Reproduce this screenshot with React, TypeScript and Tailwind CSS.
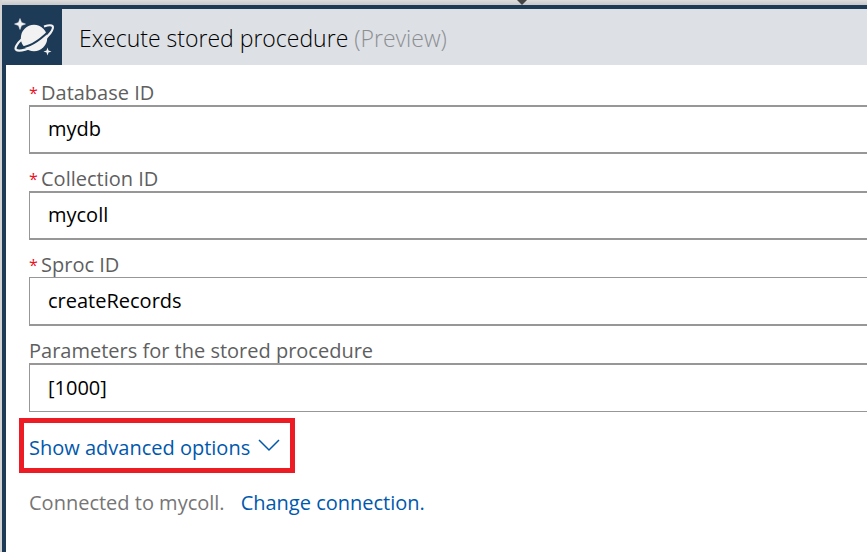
import React from "react";

type Field = {
  id: string;
  label: string;
  value: string;
  required: boolean;
  edges: string;
};

const fields: Field[] = [
  { id: "database", label: "Database ID", value: "mydb", required: true, edges: "border-y-2" },
  { id: "collection", label: "Collection ID", value: "mycoll", required: true, edges: "border-y-2" },
  { id: "sproc", label: "Sproc ID", value: "createRecords", required: true, edges: "border-t border-b-2" },
  { id: "parameters", label: "Parameters for the stored procedure", value: "[1000]", required: false, edges: "border-t-2 border-b" },
];

function PlanetIcon() {
  return (
    <svg viewBox="0 0 56 56" className="size-14" aria-hidden="true">
      <circle cx="28" cy="29" r="13.200" fill="#f2f2f2" />
      <path
        d="M13 38.800C21 38.500 32 33 42.500 22.500"
        fill="none"
        stroke="#1d3a57"
        strokeWidth="1.800"
      />
      <path
        d="M15.500 30.500C11 34.500 8.500 39 10 40.600C12.500 43 24 40.500 34 34C43 27.500 48.500 19.500 46.500 17C45 15.500 42 16.200 38 17.500"
        fill="none"
        stroke="#f2f2f2"
        strokeWidth="2.200"
      />
      <path d="M14 9.500L15.500 13.500L19.500 15L15.500 16.500L14 20.500L12.500 16.500L8.500 15L12.500 13.500Z" fill="#f2f2f2" stroke="#f2f2f2" strokeWidth="0.500" />
      <path d="M41.500 38.500L42.500 41.500L45.500 42.500L42.500 43.500L41.500 46.500L40.500 43.500L37.500 42.500L40.500 41.500Z" fill="#f2f2f2" />
    </svg>
  );
}

export default function App() {
  return (
    <div className="relative flex min-h-screen flex-col overflow-hidden bg-[#d4d4d4] pl-0.5 font-['Open_Sans','Noto_Sans',sans-serif] text-xl">
      <div className="h-[5px] shrink-0 bg-linear-to-b from-[#dedede] to-[#c8c8c8]" />
      <svg viewBox="0 0 10 5" className="absolute top-0 left-[517px] h-[5px] w-2.5" aria-hidden="true">
        <path d="M0 0H10L5 5Z" fill="#444444" />
      </svg>
      <main className="flex grow flex-col border-t-4 border-l-4 border-[#1d3a57] bg-white">
        <header className="flex h-14 items-center bg-[#dde0e5]">
          <div className="shrink-0 bg-[#1d3a57]">
            <PlanetIcon />
          </div>
          <h1 className="pt-0.5 pl-[17px] text-[23px] font-light text-black">
            Execute stored procedure <span className="text-[#8c8f92]">(Preview)</span>
          </h1>
        </header>
        <form className="flex flex-col pt-4 pl-[23px]">
          <div className="flex flex-col gap-[13px]">
            {fields.map((field) => (
              <div key={field.id} className="flex flex-col">
                <label htmlFor={field.id} className="flex h-6 items-center text-[#5f5f5f]">
                  {field.required && <span className="w-3 text-base text-[#e81123]">*</span>}
                  {field.label}
                </label>
                <input
                  id={field.id}
                  type="text"
                  defaultValue={field.value}
                  className={`h-[49px] w-full border-l border-[#979797] bg-white pb-0.5 pl-[18px] text-black outline-none ${field.edges}`}
                />
              </div>
            ))}
          </div>
          <button
            type="button"
            className="mt-1.5 -ml-2.5 flex h-[55px] items-center gap-2 self-start border-5 border-[#ed1c24] pt-1 pr-2.5 pl-[5px] text-[#0058ad]"
          >
            Show advanced options
            <svg viewBox="0 0 22 18" className="h-[18px] w-[22px]" aria-hidden="true">
              <path d="M1 1L11 11L21 1" fill="none" stroke="#0058ad" strokeWidth="1.500" />
            </svg>
          </button>
          <p className="mt-4 flex gap-4 text-[#767676]">
            Connected to mycoll.
            <a href="#change" className="text-[#0058ad]">
              Change connection.
            </a>
          </p>
        </form>
      </main>
    </div>
  );
}
